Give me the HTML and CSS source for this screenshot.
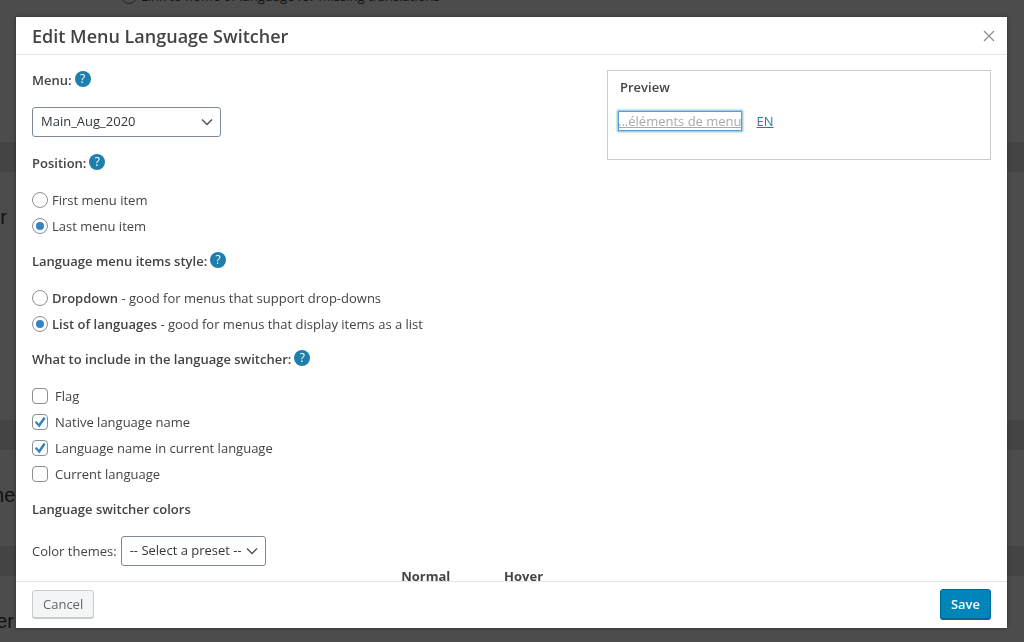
FILE: index.html
```
<!DOCTYPE html>
<html lang="en">
<head>
  <meta charset="UTF-8" />
  <title>Edit Menu Language Switcher</title>
  <link rel="stylesheet" href="styles.css">
</head>
<body>
  <!-- page behind the dialog -->
  <div class="page">
    <div class="panel panel-first">
      <label class="page-option"><input type="radio" name="missing" /> Link to home of language for missing translations</label>
    </div>
    <div class="panel panel-tall"><h3 class="panel-title">r</h3></div>
    <div class="panel"><h3 class="panel-title title-wide">ner</h3></div>
    <div class="panel"><h3 class="panel-title title-mid">er</h3></div>
  </div>

  <div class="dialog" role="dialog" aria-labelledby="dialogTitle">
    <div class="dialog-header">
      <h2 id="dialogTitle">Edit Menu Language Switcher</h2>
      <button class="close" type="button" aria-label="Close">
        <svg width="12" height="12" viewBox="0 0 12 12"><path d="M1 1L11 11M11 1L1 11" stroke="#8f8f8f" stroke-width="1.2" fill="none" /></svg>
      </button>
    </div>

    <div class="dialog-body">
      <form class="settings">
        <div class="group">
          <h4><label for="menu">Menu:</label> <a class="help" href="#">?</a></h4>
          <div class="select-row">
            <div class="select-box select-menu">
              <select id="menu"><option>Main_Aug_2020</option></select>
              <svg class="arrow" width="12" height="8" viewBox="0 0 12 8"><path d="M1 1.5L6 6.5L11 1.5" stroke="#555" stroke-width="1.5" fill="none" /></svg>
            </div>
          </div>
        </div>

        <div class="group">
          <h4>Position: <a class="help" href="#">?</a></h4>
          <label class="option"><input type="radio" name="position" /><span>First menu item</span></label>
          <label class="option"><input type="radio" name="position" checked /><span>Last menu item</span></label>
        </div>

        <div class="group">
          <h4>Language menu items style: <a class="help" href="#">?</a></h4>
          <label class="option"><input type="radio" name="style" /><span><b>Dropdown</b> - good for menus that support drop-downs</span></label>
          <label class="option"><input type="radio" name="style" checked /><span><b>List of languages</b> - good for menus that display items as a list</span></label>
        </div>

        <div class="group">
          <h4>What to include in the language switcher: <a class="help" href="#">?</a></h4>
          <label class="option check"><input type="checkbox" /><span>Flag</span></label>
          <label class="option check"><input type="checkbox" checked /><span>Native language name</span></label>
          <label class="option check"><input type="checkbox" checked /><span>Language name in current language</span></label>
          <label class="option check"><input type="checkbox" /><span>Current language</span></label>
        </div>

        <div class="group">
          <h4>Language switcher colors</h4>
          <div class="select-row">
            <label for="preset">Color themes:</label>
            <div class="select-box select-preset">
              <select id="preset"><option>-- Select a preset --</option></select>
              <svg class="arrow" width="12" height="8" viewBox="0 0 12 8"><path d="M1 1.5L6 6.5L11 1.5" stroke="#555" stroke-width="1.5" fill="none" /></svg>
            </div>
          </div>
          <table class="colors">
            <tr><td></td><th>Normal</th><th>Hover</th></tr>
          </table>
        </div>
      </form>

      <div class="preview">
        <h4>Preview</h4>
        <div class="preview-menu">
          <a class="current" href="#">...éléments de menu</a>
          <a href="#">EN</a>
        </div>
      </div>
    </div>

    <div class="dialog-footer">
      <button class="btn" type="button">Cancel</button>
      <button class="btn btn-primary" type="button">Save</button>
    </div>
  </div>
</body>
</html>
```

FILE: styles.css
```
* {
  box-sizing: border-box;
}

body {
  margin: 0;
  height: 100vh;
  overflow: hidden;
  background: #444;
  color: #444;
  font-family: "Open Sans", sans-serif;
  font-size: 13px;
  line-height: 20px;
}

h2,
h3,
h4 {
  margin: 0;
  font-weight: 600;
}

b {
  font-weight: 600;
}

a {
  color: #1a82b5;
}

/* page behind */
.page {
  display: flex;
  flex-direction: column;
  gap: 30px;
}

.panel {
  height: 96px;
  background: #4c4c4c;
  overflow: hidden;
}

.panel-first {
  height: 142px;
}

.panel-tall {
  height: 248px;
}

.page-option {
  display: flex;
  align-items: center;
  gap: 4px;
  margin: -14px 0 0 121px;
  color: #111;
}

.page-option input {
  border-color: #222;
  background: transparent;
}

.panel-title {
  display: flex;
  justify-content: flex-end;
  width: 7px;
  padding-top: 33px;
  color: #111;
  font-family: "Liberation Sans", Arial, sans-serif;
  font-size: 20px;
  font-weight: 400;
  line-height: 24px;
}

.title-wide {
  width: 22px;
}

.title-mid {
  width: 14px;
}

/* dialog */
.dialog {
  position: fixed;
  top: 17px;
  right: 17px;
  bottom: 14px;
  left: 16px;
  display: flex;
  flex-direction: column;
  background: #fff;
  box-shadow: 0 0 4px rgba(0, 0, 0, 0.4);
}

.dialog-header {
  display: flex;
  align-items: center;
  justify-content: space-between;
  height: 38px;
  padding: 0 12px 0 16px;
  border-bottom: 1px solid #e5e5e5;
}

.dialog-header h2 {
  font-size: 18px;
  line-height: 24px;
}

.close {
  display: flex;
  padding: 0;
  border: 0;
  background: none;
}

.dialog-body {
  display: flex;
  flex: 1;
  align-items: flex-start;
  min-height: 0;
  padding: 0 16px;
  overflow: hidden;
}

.settings {
  flex: 1;
  padding-top: 12px;
}

.group {
  margin-bottom: 9px;
}

.group h4 {
  display: flex;
  align-items: center;
  gap: 3px;
  height: 26px;
  margin-bottom: 11px;
}

.help {
  width: 16px;
  height: 16px;
  margin-bottom: 3px;
  border-radius: 50%;
  background: #1f7fac;
  color: #fff;
  font-size: 12px;
  font-weight: 400;
  line-height: 16px;
  text-align: center;
  text-decoration: none;
}

.option {
  display: flex;
  align-items: center;
  gap: 4px;
  height: 26px;
}

.check {
  gap: 7px;
}

input {
  display: flex;
  align-items: center;
  justify-content: center;
  appearance: none;
  width: 16px;
  height: 16px;
  margin: 0;
  border: 1px solid #8b8f94;
  background: #fff;
}

input[type="radio"] {
  border-radius: 50%;
}

input[type="checkbox"] {
  border-radius: 4px;
}

input[type="radio"]:checked::before {
  content: "";
  width: 8px;
  height: 8px;
  border-radius: 50%;
  background: #3582c4;
}

input[type="checkbox"]:checked::before {
  content: "";
  width: 12px;
  height: 12px;
  background: #3582c4;
  clip-path: polygon(6% 52%, 22% 42%, 40% 64%, 80% 8%, 98% 18%, 44% 96%);
}

.select-row {
  display: flex;
  align-items: center;
  gap: 4px;
  padding: 3px 0 4px;
}

.select-box {
  position: relative;
}

.select-menu {
  width: 189px;
}

.select-preset {
  width: 145px;
}

select {
  appearance: none;
  width: 100%;
  height: 30px;
  padding: 0 24px 2px 8px;
  border: 1px solid #7e8993;
  border-radius: 3px;
  background: #fff;
  color: #32373c;
  font: inherit;
}

.arrow {
  position: absolute;
  top: 11px;
  right: 8px;
  pointer-events: none;
}

.colors {
  margin-top: -4px;
  border-collapse: collapse;
}

.colors td {
  width: 370px;
}

.colors th {
  width: 103px;
  padding: 0;
  font-weight: 700;
  text-align: left;
}

.preview {
  width: 384px;
  height: 90px;
  margin-top: 15px;
  padding: 6px 10px;
  border: 1px solid #ccc;
}

.preview h4 {
  padding-left: 2px;
}

.preview-menu {
  display: flex;
  gap: 15px;
  margin-top: 14px;
}

.preview-menu .current {
  color: #aaa;
  outline: 1px solid #5b9dd9;
  outline-offset: -1px;
  box-shadow: 0 0 2px 1px rgba(30, 140, 190, 0.6);
}

.dialog-footer {
  display: flex;
  align-items: center;
  justify-content: space-between;
  height: 47px;
  padding: 0 16px 2px;
  border-top: 1px solid #e5e5e5;
}

.btn {
  height: 28px;
  padding: 0 10px;
  border: 1px solid #ccc;
  border-radius: 3px;
  background: #f3f5f6;
  box-shadow: 0 1px 0 #ccc;
  color: #666;
  font: inherit;
}

.btn-primary {
  height: 30px;
  border-color: #006799;
  background: #0085ba;
  box-shadow: 0 1px 0 #006799;
  color: #fff;
  font-weight: 600;
}
```
